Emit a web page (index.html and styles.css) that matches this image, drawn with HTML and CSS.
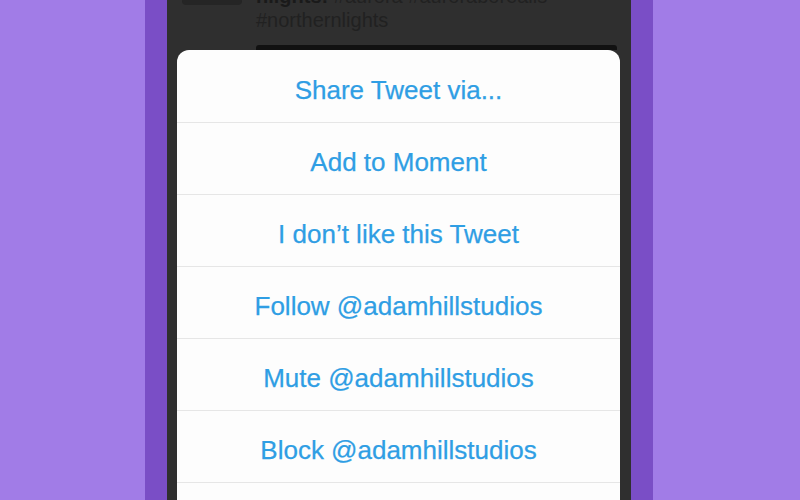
FILE: index.html
```html
<!DOCTYPE html>
<html lang="en">
<head>
    <meta charset="UTF-8">
    <meta name="viewport" content="width=device-width, initial-scale=1.0">
    <title>Tweet actions</title>
    <link rel="stylesheet" href="styles.css">
</head>
<body>
    <div id="stage">
        <div id="phone">
            <div id="screen">
                <div class="tweet">
                    <div class="tweet-thumb"></div>
                    <div class="tweet-body">
                        <div class="tweet-text"><b>nlights:</b> #aurora #auroraborealis<br>#northernlights</div>
                        <div class="tweet-media"></div>
                    </div>
                </div>
                <div class="sheet">
                    <div class="sheet-item">Share Tweet via...</div>
                    <div class="sheet-item">Add to Moment</div>
                    <div class="sheet-item">I don’t like this Tweet</div>
                    <div class="sheet-item">Follow @adamhillstudios</div>
                    <div class="sheet-item">Mute @adamhillstudios</div>
                    <div class="sheet-item">Block @adamhillstudios</div>
                    <div class="sheet-item"></div>
                </div>
            </div>
        </div>
    </div>
</body>
</html>
```

FILE: styles.css
```css
body {
    margin: 0;
    padding: 0;
    background: #a17ce7;
    font-family: "Liberation Sans", Arial, sans-serif;
    overflow: hidden;
}

#stage {
    width: 100vw;
    height: 100vh;
    display: flex;
    justify-content: center;
}

#phone {
    width: 464px;
    height: 500px;
    margin-left: -2px;
    padding: 0 22px;
    background: #7a4ec6;
}

#screen {
    height: 500px;
    background: #2f2f2f;
    overflow: hidden;
}

.tweet {
    height: 50px;
    display: flex;
    gap: 14px;
    padding: 0 14px 0 15px;
    overflow: hidden;
}

.tweet-thumb {
    width: 60px;
    height: 5px;
    background: #252525;
    border-radius: 0 0 4px 4px;
}

.tweet-body {
    flex: 1;
    display: flex;
    flex-direction: column;
}

.tweet-text {
    margin-top: -16px;
    font-size: 20px;
    line-height: 24px;
    color: #212121;
}

.tweet-text b {
    color: #1a1a1a;
}

.tweet-media {
    margin-top: auto;
    height: 5px;
    background: #111;
    border-radius: 3px 3px 0 0;
}

.sheet {
    margin: 0 11px 0 10px;
    background: #fdfdfd;
    border-radius: 12px 12px 0 0;
}

.sheet-item {
    height: 72px;
    box-sizing: border-box;
    padding-top: 8px;
    display: flex;
    align-items: center;
    justify-content: center;
    font-size: 26px;
    color: #2f9ee4;
    -webkit-text-stroke: 0.25px #2f9ee4;
}

.sheet-item + .sheet-item {
    border-top: 1px solid #e6e6e6;
}
```
